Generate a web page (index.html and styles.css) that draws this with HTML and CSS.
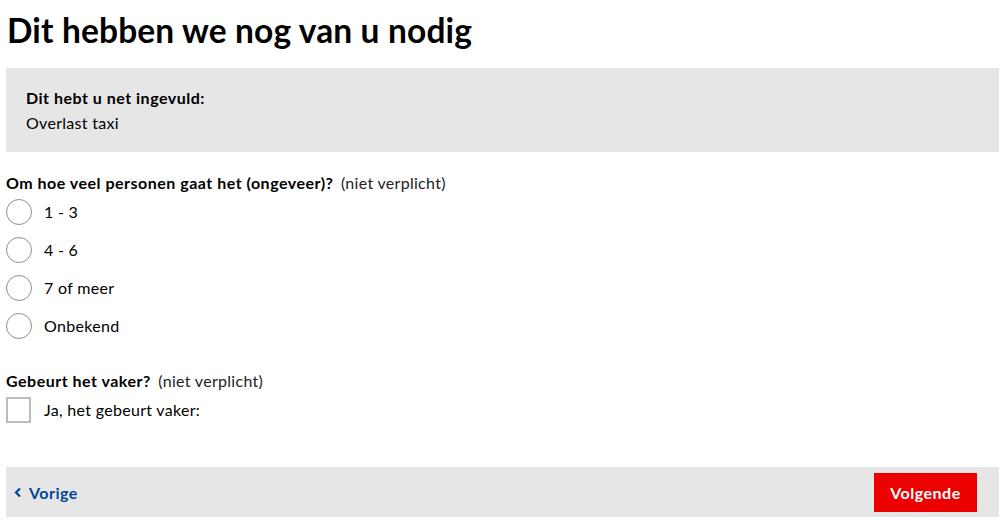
FILE: index.html
```html
<!DOCTYPE html>
<html lang="nl">
<head>
<meta charset="utf-8">
<title>Dit hebben we nog van u nodig</title>
<link rel="stylesheet" href="styles.css">
</head>
<body>
<main class="page">
  <h1 class="title">Dit hebben we nog van u nodig</h1>

  <section class="summary">
    <div class="summary-label">Dit hebt u net ingevuld:</div>
    <div class="summary-value">Overlast taxi</div>
  </section>

  <div class="question" role="radiogroup">
    <div class="question-label"><strong>Om hoe veel personen gaat het (ongeveer)?</strong> <span class="optional">(niet verplicht)</span></div>
    <label class="option"><span class="radio"></span><span class="option-text">1 - 3</span></label>
    <label class="option"><span class="radio"></span><span class="option-text">4 - 6</span></label>
    <label class="option"><span class="radio"></span><span class="option-text">7 of meer</span></label>
    <label class="option"><span class="radio"></span><span class="option-text">Onbekend</span></label>
  </div>

  <div class="question question-second">
    <div class="question-label"><strong>Gebeurt het vaker?</strong> <span class="optional">(niet verplicht)</span></div>
    <label class="option"><span class="checkbox"></span><span class="option-text">Ja, het gebeurt vaker:</span></label>
  </div>

  <nav class="footer">
    <a class="prev" href="#"><svg class="chev" width="8" height="11" viewBox="0 0 8 11"><path d="M6 1.5 L2 5.5 L6 9.5" fill="none" stroke="currentColor" stroke-width="2.2"/></svg>Vorige</a>
    <button class="next" type="button">Volgende</button>
  </nav>
</main>
</body>
</html>
```

FILE: styles.css
```css
* { box-sizing: border-box; }
html, body { margin: 0; padding: 0; background: #fff; }
body {
  font-family: Lato, "Noto Sans", "Liberation Sans", sans-serif;
  color: #000;
  font-size: 16px;
  letter-spacing: 0.3px;
}
.page {
  width: 993px;
  margin-left: 6px;
}
.title {
  font-size: 33.5px;
  font-weight: 700;
  line-height: 40px;
  margin: 0;
  padding: 10px 0 0 1px;
  height: 68px;
  letter-spacing: 0.15px;
}
.summary {
  background: #e6e6e6;
  height: 84px;
  padding: 19px 20px 0 20px;
}
.summary-label {
  font-weight: 700;
  line-height: 22px;
  letter-spacing: 0.5px;
}
.summary-value {
  line-height: 22px;
  margin-top: 3px;
}
.question-label {
  margin-top: 21px;
  line-height: 20px;
  height: 20px;
}
.question-label strong { font-weight: 700; letter-spacing: 0.5px; }
.optional { margin-left: 3px; color: #222; }
.option {
  display: flex;
  align-items: center;
  gap: 12px;
  height: 38px;
}
.option-text { line-height: 20px; }
.radio {
  width: 26px;
  height: 26px;
  border: 1.5px solid #8f8f8f;
  border-radius: 50%;
  flex: none;
  background: #fff;
}
.checkbox {
  width: 25px;
  height: 26px;
  border: 2px solid #bcbcbc;
  flex: none;
  background: #fff;
  margin-right: 1px;
}
.question-second .question-label { margin-top: 26px; }
.footer {
  margin-top: 38px;
  background: #e6e6e6;
  height: 50px;
  display: flex;
  align-items: center;
  justify-content: space-between;
  padding: 0 22px 0 8px;
}
.prev {
  color: #004699;
  font-weight: 700;
  text-decoration: none;
  display: flex;
  align-items: center;
  gap: 7px;
  letter-spacing: 0.5px;
}
.chev { flex: none; }
.next {
  background: #ec0000;
  color: #fff;
  border: 0;
  font-family: inherit;
  font-weight: 700;
  font-size: 16px;
  letter-spacing: 0.5px;
  width: 103px;
  height: 39px;
  padding: 0;
  margin-top: 0;
}
```
